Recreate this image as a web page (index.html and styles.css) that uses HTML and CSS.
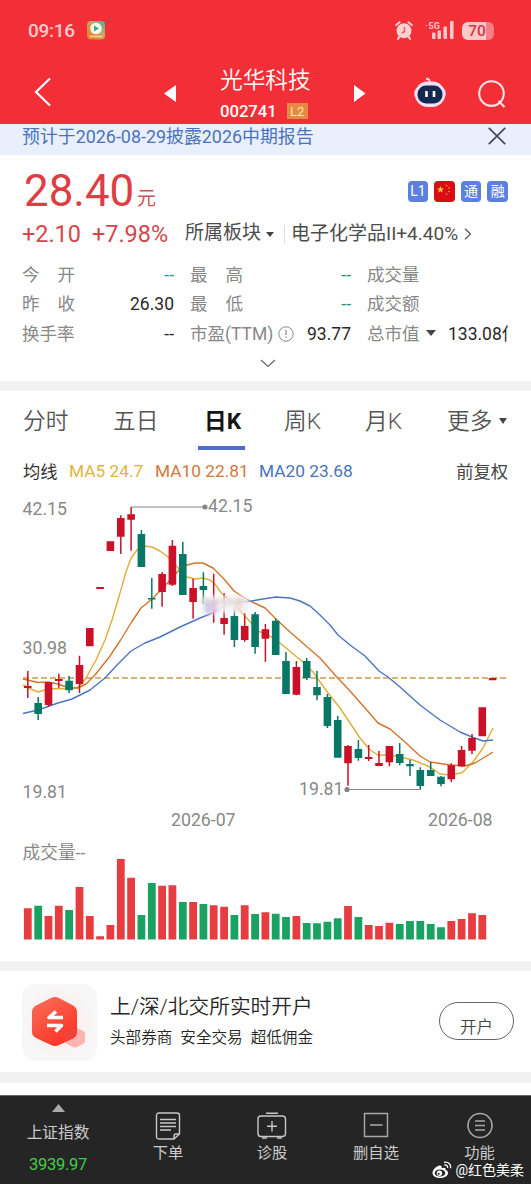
FILE: index.html
```html
<!DOCTYPE html>
<html lang="zh-CN">
<head>
<meta charset="utf-8">
<title>光华科技 002741</title>
<link rel="stylesheet" href="styles.css">
</head>
<body>
<div class="phone">
  <header class="top">
    <div class="status">
      <span class="clock">09:16</span>
      <svg class="app" width="18" height="19" viewBox="0 0 18 19"><defs><linearGradient id="ag" x1="1" y1="0" x2="0" y2="1"><stop offset="0" stop-color="#39b8aa"/><stop offset=".4" stop-color="#c5a866"/><stop offset="1" stop-color="#f07a26"/></linearGradient></defs><rect width="18" height="18.500" rx="4" fill="url(#ag)"/><circle cx="9" cy="7.500" r="5.800" fill="#fff6e6"/><path d="M7 4.500l5 3-5 3z" fill="#38a99d"/><path d="M2.500 15.500h13" stroke="#ffd08a" stroke-width="1.500"/></svg>
      <svg class="alarm" width="18" height="19" viewBox="0 0 18 19"><g fill="none" stroke="#ffd0d2" stroke-width="2" stroke-linecap="round"><path d="M1.200 4 4.500 1.200M16.800 4l-3.300-2.800M4 16l-1 2M14 16l1 2"/></g><circle cx="9" cy="9.800" r="7.500" fill="#ffd0d2"/><path d="M9.500 6v4.500L7 12" fill="none" stroke="#ee5960" stroke-width="1.500"/></svg>
      <svg class="signal" width="30" height="20" viewBox="0 0 30 20"><circle cx="1.500" cy="4.500" r="1" fill="#f8767a"/><text x="3.500" y="8" class="five-g">5G</text><g fill="#ffc9cb"><rect x="7" y="11.500" width="3.500" height="6.500" rx="1"/><rect x="12.500" y="9.500" width="3.500" height="8.500" rx="1"/><rect x="18.500" y="5.500" width="3.500" height="12.500" rx="1"/><rect x="25" y="0" width="3.500" height="18" rx="1"/></g></svg>
      <span class="battery"><span>70</span></span>
    </div>
    <nav class="titlebar">
      <svg class="back" width="18" height="30" viewBox="0 0 18 30"><path d="M16 1.500 2 15l14 13.500" fill="none" stroke="#fff" stroke-width="2.200"/></svg>
      <svg class="prev" width="12" height="18" viewBox="0 0 12 18"><path d="M12 0v17L0 8.500z" fill="#fff"/></svg>
      <div class="name"><h1>光华科技</h1><p>002741<b>L2</b></p></div>
      <svg class="next" width="12" height="18" viewBox="0 0 12 18"><path d="M0 0v17l11.500-8.500z" fill="#fff"/></svg>
      <svg class="robot" width="32" height="31" viewBox="0 0 32 31"><path d="M16 6c0-3-1-4-4-4M13 1l3 2" fill="none" stroke="#f5e6ee" stroke-width="1.500"/><rect x="0" y="10" width="32" height="13" rx="6" fill="#f7a9cb"/><rect x="1" y="4.500" width="30" height="25.500" rx="12.500" fill="#f7dff2"/><rect x="3.500" y="8.500" width="25" height="18" rx="8.500" fill="#132a50"/><path d="M12.500 14v6M20 14v6" stroke="#fff" stroke-width="2.600"/></svg>
      <svg class="search" width="28" height="28" viewBox="0 0 28 28"><g fill="none" stroke="#ffe9ea" stroke-width="2"><circle cx="13.500" cy="13.500" r="12.300"/><path d="m20.500 21 6 6"/></g></svg>
    </nav>
  </header>

  <div class="notice"><span>预计于2026-08-29披露2026中期报告</span><svg width="18" height="18" viewBox="0 0 18 18"><path d="M.8.800l16.400 16.400M17.200.800.800 17.200" stroke="#444b55" stroke-width="1.700"/></svg></div>

  <section class="quote">
    <div class="price-row"><strong>28.40</strong><em>元</em>
      <div class="tags"><i>L1</i><i class="flag"><svg width="21" height="21" viewBox="0 0 21 21"><path d="m6.500 5 .9 2.400 2.600.1-2 1.600.7 2.500-2.200-1.400-2.200 1.400.7-2.500-2-1.600 2.600-.1z" fill="#fc3"/><g fill="#f1a82a"><circle cx="12.500" cy="4.500" r=".8"/><circle cx="15" cy="7" r=".8"/><circle cx="15" cy="10.500" r=".8"/><circle cx="12.500" cy="13" r=".8"/></g></svg></i><i>通</i><i>融</i></div>
    </div>
    <div class="change-row"><span class="delta">+2.10</span><span class="pct">+7.98%</span><span class="sector">所属板块</span><svg class="tri" width="8" height="5" viewBox="0 0 8 5"><path d="M0 0h8L4 5z" fill="#444"/></svg><span class="industry">电子化学品II+4.40%</span><svg class="gt" width="8" height="12" viewBox="0 0 8 12"><path d="m1 .8 5.500 5.200L1 11.200" fill="none" stroke="#555" stroke-width="1.200"/></svg></div>
    <div class="stats">
      <span class="spread"><u>今</u><u>开</u></span><b class="teal">--</b><span class="spread"><u>最</u><u>高</u></span><b class="green">--</b><span>成交量</span><b></b>
      <span class="spread"><u>昨</u><u>收</u></span><b>26.30</b><span class="spread"><u>最</u><u>低</u></span><b class="green">--</b><span>成交额</span><b></b>
      <span>换手率</span><b>--</b><span class="pe">市盈(TTM)<svg width="16" height="16" viewBox="0 0 16 16"><circle cx="8" cy="8" r="7.200" fill="none" stroke="#888"/><path d="M8 4v5M8 10.500v1.500" stroke="#888" stroke-width="1.200"/></svg></span><b>93.77</b><span>总市值<svg class="cap" width="10" height="6" viewBox="0 0 10 6"><path d="M0 0h10L5 6z" fill="#444"/></svg></span><b class="clip">133.08亿</b>
    </div>
    <svg class="expand" width="16" height="9" viewBox="0 0 16 9"><path d="m1 1 7 6.500L15 1" fill="none" stroke="#666" stroke-width="1.200"/></svg>
  </section>

  <section class="kline">
    <div class="tabs"><span class="t1">分时</span><span class="t2">五日</span><span class="t3 active">日K</span><span class="t4">周K</span><span class="t5">月K</span><span class="t6">更多</span><svg width="8" height="6" viewBox="0 0 8 6"><path d="M0 0h8L4 6z" fill="#444"/></svg></div>
    <div class="ma"><span class="lead">均线</span><span class="ma5">MA5 24.7</span><span class="ma10">MA10 22.81</span><span class="ma20">MA20 23.68</span><span class="adjust">前复权</span></div>
    <svg class="chart" width="531" height="473" viewBox="0 488 531 473">
      <defs><filter id="soft" x="-30%" y="-60%" width="160%" height="220%"><feGaussianBlur stdDeviation="2.200"/></filter></defs>
      <path class="dash" d="M23 678H508"/>
      <path class="line l5" d="M23 685 33 690 38 692 48 689 58 688.500 69 689 79 687 86 678 96 660 105 640 112 620 120 593 126 572 131 558 137 550 144 546 152 547 160 551 168 557 180 570 187 577 195 579 203 578 210 580 215 584 222 594 234 604 245 616 258 631 270 636 280 643 292 653 303 662 313 672 328 693 340 708 350 723 360 738 370 750 378 755 390 755 400 757 413 760 430 767 440 774 450 775 462 772.700 473 762 483 748 493 728"/>
      <path class="line l10" d="M23 679 38 682.500 48 682 58 684 69 688 78 688 86 684 95 675 110 656 120 641 131 623 141 608 151 600 162 589 172 578 181 568 187 565 195 563 203 563 213 568 224 579 234 591 240 595 250 601 265 608 277 620 290 632 305 645 320 658 335 675 350 691 365 708 378 723 390 729 405 742 420 756 430 762 450 765 465 766 475 763 485 757 493 752"/>
      <path class="line l20" d="M23 713.500 38 710 58 703 72 699 90 690 105 678 118 664 131 651 145 643 160 637 180 627 200 618 210 614 228 604 251 601 263 599 276 597 290 598 300 601 310 606 320 615 330 625 338 635 350 645 365 656 379 671 388 677 400 687 420 705 440 720 460 732 472 737 483 741 493 740"/>
      <path class="wick r" d="M27.800 671V698M48.500 682V707M58.800 673.700V687.700M79.500 655.700V693M120.800 515.300V554M131.100 507V550.700M162.100 572V606.700M172.400 540V586M193.100 578.700V618.700M213.700 573.700V622.700M224.100 593V634.700M244.700 613V641.700M265.400 624V661.700M296.400 661V695.300M348 745V785.700M368.700 745V761M379 751V766M389.400 746V766.300M451.300 763.300V782M461.600 746V766.700M472 734V754"/>
      <path class="wick g" d="M38.200 697V720M69.100 676V693M141.400 530V567M151.800 578V608.700M182.800 541.700V595M203.400 572.300V604M234.400 605V647M255.100 612V653.700M275.700 618.700V655M286 652V694M306.700 658V680M317 671V700.300M327.400 694V728M337.700 716V757M358.400 740V760.700M399.700 743V765.300M410 760V776M420.300 767.300V789M430.700 762V776M441 776V786.300"/>
      <path class="body r" d="M27.800 686V688M48.500 682.300V705M58.800 679V681M79.500 665V684M89.800 628V646.300M100.100 587V589M110.400 541.300V551M120.800 518V536.700M131.100 514.300V519.700M162.100 574V592M172.400 545.700V584.700M193.100 588V602M224.100 618V624M244.700 626V640M265.400 629.300V638.700M296.400 667V694.700M348 746V763.300M368.700 757V759M379 763V766M389.400 746V762.300M451.300 765.300V779.300M461.600 750V766.300M472 738V750.700M482.300 707.300V736.300M492.600 678V680.200"/>
      <path class="body g" d="M38.200 703V714M69.100 680.700V690.300M141.400 534V567M151.800 598V599.500M182.800 554V595M203.400 586V590M234.400 616V640M255.100 614.300V647M275.700 620.700V655M286 661V694M306.700 661V678M317 687V695.300M327.400 697V726M337.700 720V757.700M358.400 749V758M399.700 754V763M410 764V766.300M420.300 770V786M430.700 770V776M441 776.700V784"/>
      <g filter="url(#soft)"><rect x="202" y="596" width="47" height="17" fill="#f3eff1" opacity=".9"/><rect x="205" y="602" width="5" height="12" fill="#c4c8e3"/><rect x="211" y="600" width="6" height="14" fill="#dfc0df"/><rect x="237" y="598" width="4" height="14" fill="#eed4d0"/><path d="M199 601H248" stroke="#c9c0bc" stroke-width="1.500"/></g>
      <g class="pointer"><path d="M131 507H205M347 789.500H421"/><circle cx="205" cy="507" r="2"/><circle cx="347" cy="789.500" r="2"/></g>
      <g class="label"><text x="22.500" y="515">42.15</text><text x="22.500" y="653.500">30.98</text><text x="22.500" y="798">19.81</text><text x="208" y="512">42.15</text><text x="299" y="795">19.81</text><text x="171" y="826">2026-07</text><text x="428" y="826">2026-08</text><text x="22.500" y="859">成交量--</text></g>
      <path class="vol vr" d="M27.800 939.500V908.300M48.500 939.500V916M58.800 939.500V905.700M79.500 939.500V887M89.800 939.500V916M100.100 939.500V936.300M110.400 939.500V925M120.800 939.500V859M131.100 939.500V877.700M162.100 939.500V885.700M172.400 939.500V885.300M193.100 939.500V902M213.700 939.500V905.300M224.100 939.500V906.700M244.700 939.500V905.300M265.400 939.500V912.300M296.400 939.500V916M348 939.500V906M368.700 939.500V925M379 939.500V926M389.400 939.500V922.700M451.300 939.500V921M461.600 939.500V919M472 939.500V913.300M482.300 939.500V915"/>
      <path class="vol vg" d="M38.200 939.500V905.700M69.100 939.500V910M141.400 939.500V915M151.800 939.500V883M182.800 939.500V902M203.400 939.500V904M234.400 939.500V915M255.100 939.500V914M275.700 939.500V913.700M286 939.500V917M306.700 939.500V923M317 939.500V923.300M327.400 939.500V921.700M337.700 939.500V918.300M358.400 939.500V917M399.700 939.500V924M410 939.500V921M420.300 939.500V921M430.700 939.500V924M441 939.500V927.300"/>
    </svg>
  </section>

  <section class="promo">
    <svg class="logo" width="75" height="77" viewBox="0 0 75 77"><defs><linearGradient id="hex" x1="0" y1="0" x2=".6" y2="1"><stop offset="0" stop-color="#f8705c"/><stop offset="1" stop-color="#fd3426"/></linearGradient><radialGradient id="tile"><stop offset="0" stop-color="#ffe9e6"/><stop offset="1" stop-color="#f7f7f8"/></radialGradient></defs><rect width="75" height="77" rx="13" fill="url(#tile)"/><path d="M54 43.500 61 47q2 1 2 3v7q0 2-2 3l-6 3q-2 1-4 0l-6-3q-2-1-2-3v-7q0-2 2-3l6-3q1.500-1 3-.5z" fill="#ff6a62" opacity=".45"/><path d="M29 14q4-2 8 0l14 7.500q4 2 4 6.500v20q0 4.500-4 6.500L37 61q-4 2-8 0l-15-7q-4-2-4-6.500V28q0-4.500 4-6.500z" fill="url(#hex)"/><path d="M41 51q1-2 3-3l7-4 3.500 1.500v4L51 54.500 41 59z" fill="#e94a45" opacity=".55"/><path d="M34 27.500 27 33.500h14M25 41.500h14.500l-6 6" fill="none" stroke="#fff" stroke-width="3.600" stroke-linejoin="round"/></svg>
    <div class="copy"><h2>上/深/北交所实时开户</h2><p>头部券商&ensp;安全交易&ensp;超低佣金</p></div>
    <button>开户</button>
  </section>
  <div class="gap"></div>

  <footer class="dock">
    <div class="item index"><svg width="13" height="8" viewBox="0 0 13 8"><path d="M0 8h13L6.500 0z" fill="#aaa"/></svg><span>上证指数</span><b>3939.97</b></div>
    <div class="item order"><svg width="26" height="28" viewBox="0 0 26 28"><g fill="none" stroke="#c8c8c8" stroke-width="1.400"><path d="M4 1h18q2.500 0 2.500 2.500V22L19 27H4q-2.500 0-2.500-2.500v-21Q1.500 1 4 1zM24 22h-3q-2 0-2 2v3M5 7.500h16M5 11h16M5 14.500h16M5 18h11"/></g></svg><span>下单</span></div>
    <div class="item clinic"><svg width="30" height="28" viewBox="0 0 30 28"><g fill="none" stroke="#c8c8c8" stroke-width="1.400"><rect x="1" y="4" width="27.500" height="20.500" rx="3"/><path d="M9 1.200h12M5 26h5M20 26h5M15 9v10.500M10 14.200h10"/></g></svg><span>诊股</span></div>
    <div class="item remove"><svg width="26" height="28" viewBox="0 0 26 28"><path d="M1.500 1.500h23v23h-23zM7 13h12.500" fill="none" stroke="#aaa" stroke-width="1.400"/></svg><span>删自选</span></div>
    <div class="item more"><svg width="28" height="28" viewBox="0 0 28 28"><g fill="none" stroke="#a6a6a6" stroke-width="1.600"><circle cx="14" cy="13.500" r="12"/><path d="M9 9h10M9 13.500h10M9 18h10"/></g></svg><span>功能</span></div>
    <div class="watermark"><svg width="20" height="18" viewBox="0 0 20 18"><path d="M8 4.500C4 5 .5 9 .5 12c0 3 3.500 5 8 5s7.500-2.500 7.500-5c0-1.700-1.200-2.700-2.500-3 .6-2-.7-3-4-1.700C10 5.500 9.500 4.500 8 4.500z" fill="#fff"/><ellipse cx="8" cy="12" rx="5.300" ry="3.600" fill="#252525"/><circle cx="7.500" cy="12.200" r="2.700" fill="#fff"/><circle cx="6.700" cy="12.700" r="1" fill="#252525"/><path d="M12 1.300c4-1 7.500 2.200 6.400 6M12.300 4c2-.4 3.700 1 3.200 3" fill="none" stroke="#fff" stroke-width="1.300"/></svg>@红色美柔</div>
  </footer>
</div>
</body>
</html>
```
FILE: styles.css
```css
* { box-sizing: border-box; }
body { margin: 0; background: #fff; font-family: Roboto, "Noto Sans CJK SC", sans-serif; color: #333; }
h1, h2, p { margin: 0; font-weight: 400; }
b, i, em, u, strong { font-weight: 400; font-style: normal; text-decoration: none; }
svg { display: block; flex: none; }
.phone { width: 531px; height: 1184px; overflow: hidden; display: flex; flex-direction: column; }
.phone > * { flex: none; }

.top { height: 124px; background: #f22f37; color: #fff; }
.status { height: 60px; display: flex; align-items: center; padding: 1px 37px 0 28px; }
.clock { width: 59px; font: 500 19px/24px Roboto, sans-serif; color: #ffc9cb; letter-spacing: -.3px; }
.alarm { margin-left: auto; margin-right: 12px; }
.signal { margin-right: 7px; }
.five-g { font: 700 9px Roboto, sans-serif; fill: #ffc9cb; }
.battery { width: 32px; height: 18px; border-radius: 6px; background: linear-gradient(90deg, #ffc9cb 74%, #f67e84 74%); display: flex; justify-content: center; padding-right: 2px; color: #d8343e; font: 500 15.500px/18px Roboto, sans-serif; }
.titlebar { height: 64px; display: flex; align-items: center; padding: 0 24px 0 34px; }
.prev { margin-left: 112px; margin-top: 4px; }
.name { width: 178px; padding: 4px 0 0 44px; white-space: nowrap; }
.name h1 { font-size: 22.700px; line-height: 34px; font-weight: 350; }
.name p { display: flex; align-items: center; font-size: 16.800px; line-height: 26px; letter-spacing: -.1px; font-weight: 500; }
.name b { margin-left: 10px; width: 21px; height: 16px; background: #e88a43; color: #ffe6ad; font-size: 13px; line-height: 17px; text-align: center; }
.next { margin-top: 4px; }
.robot { margin-left: 48px; margin-top: 1px; }
.search { margin-left: auto; margin-top: 3px; margin-right: 1px; }

.notice { height: 31px; background: #e9effd; color: #4a73bd; display: flex; justify-content: space-between; padding: 0 25px 0 22px; font-size: 17.900px; line-height: 25px; }
.notice svg { margin-top: 3px; }

.quote { height: 236px; border-bottom: 10px solid #f1f1f2; }
.price-row { height: 60px; display: flex; padding: 5px 23px 0 24px; color: #dc3e44; }
.price-row strong { font-size: 43.900px; line-height: 62px; width: 113px; }
.price-row em { font-size: 19px; line-height: 28px; margin-top: 25px; color: #cc5358; }
.tags { margin: 21px 0 0 auto; display: flex; gap: 6px; }
.tags i { width: 20.600px; height: 20.600px; border-radius: 4px; overflow: hidden; background: #5b80df; color: #fff; font-size: 14px; line-height: 21px; text-align: center; }
.tags .flag { background: #d90d15; }
.change-row { height: 44px; padding: 0 0 6px 22px; display: flex; align-items: center; font-size: 19px; white-space: nowrap; color: #4d4d4d; }
.delta, .pct { font-size: 23.400px; color: #d3464b; }
.delta { width: 70px; }
.pct { width: 93px; }
.sector { width: 81px; line-height: 26px; padding-bottom: 3px; }
.industry { margin-left: 10px; border-left: 1px solid #ddd; padding-left: 6px; width: 178px; line-height: 18px; }
.gt { margin-left: 2px; }
.stats { display: grid; grid-template-columns: 74px 78px 99px 62px 75px 65px; grid-auto-rows: 29.700px; padding: 1.500px 0 0 22px; width: 508px; line-height: 29.700px; font-size: 17.500px; color: #888; white-space: nowrap; }
.stats > span:nth-of-type(3n+2) { margin-left: 16px; }
.stats > span:nth-of-type(3n) { margin-left: 32px; }
.stats > span { display: flex; }
.stats > b { color: #292929; text-align: right; }
.stats > b:nth-of-type(3n+2) { transform: translateX(16px); }
.stats b.teal { color: #249aa2; }
.stats b.green { color: #249074; }
.spread { justify-content: space-between; width: 53px; }
.pe svg { margin: 6px 0 0 5px; }
.cap { margin: 10px 0 0 6px; }
.stats .clip { overflow: hidden; margin-left: 38px; width: 60px; text-align: left; }
.expand { margin: 9px auto 0 260px; }

.kline { height: 580px; border-bottom: 10px solid #f1f1f2; }
.tabs { height: 59px; display: flex; align-items: center; padding-left: 23px; font-size: 22.700px; color: #555; line-height: 61px; font-weight: 350; }
.t1 { width: 90px; }
.t2 { width: 85px; }
.t3 { width: 47px; margin-right: 39px; padding-left: 6px; }
.t4 { width: 81px; }
.t5 { width: 82px; }
.t6 { width: 52px; }
.tabs > span { height: 59px; }
.tabs .active { border-bottom: 4px solid #4e6dce; color: #151515; font-weight: 700; }
.ma { height: 38px; display: flex; align-items: center; padding: 3px 23px 0 23px; font-size: 17.300px; }
.lead { width: 46px; }
.ma5 { width: 86px; color: #dfb53c; }
.ma10 { width: 104px; color: #d3783c; }
.ma20 { color: #4a73bd; }
.adjust { margin-left: auto; color: #444; }
.chart .dash { stroke: #cf9a48; stroke-width: 1.500; stroke-dasharray: 6 3; }
.chart .wick { stroke-width: 1.500; }
.chart .body { stroke-width: 7.600; }
.chart .r { stroke: #cb1127; }
.chart .g { stroke: #087765; }
.line { fill: none; stroke-width: 1.400; stroke-linejoin: round; }
.l5 { stroke: #dfae37; }
.l10 { stroke: #d4742c; }
.l20 { stroke: #4b76c2; }
.pointer { stroke: #858585; fill: #858585; stroke-width: 1.200; }
.label { fill: #888; font-size: 17.700px; }
.vol { stroke-width: 7.800; }
.vr { stroke: #e73d40; }
.vg { stroke: #1aa263; }

.promo { height: 112px; border-bottom: 11px solid #f1f1f2; padding: 13px 17px 0 22px; display: flex; }
.copy { margin-left: 13px; color: #252525; }
.copy h2 { font-size: 20.700px; line-height: 30px; margin-top: 8px; font-weight: 350; }
.copy p { font-size: 15.600px; line-height: 24px; margin-top: 4px; font-weight: 350; }
.promo button { margin: 18px 0 0 auto; width: 75px; height: 38px; border: 1px solid #666; border-radius: 19px; background: #fff; color: #444; font: 350 16.500px/38px "Noto Sans CJK SC", sans-serif; padding: 4px 0 0; }
.gap { height: 12px; background: #fff; }
.dock { height: 89px; background: #252525; display: flex; color: #ccc; font-size: 15.300px; line-height: 22px; position: relative; border-top: 1px solid #666; }
.item { display: flex; flex-direction: column; align-items: center; padding-top: 16px; width: 104px; }
.item span { margin-top: 2px; }
.index { width: 116px; padding-top: 8px; }
.index span { margin-top: 10px; font-size: 15.700px; }
.index b { margin-top: 10px; font-size: 16.500px; letter-spacing: -.3px; color: #43cf45; }
.more { width: 103px; }
.watermark { position: absolute; right: 7px; bottom: 4px; display: flex; gap: 3px; align-items: center; color: #fff; font-size: 14px; line-height: 20px; }
```
